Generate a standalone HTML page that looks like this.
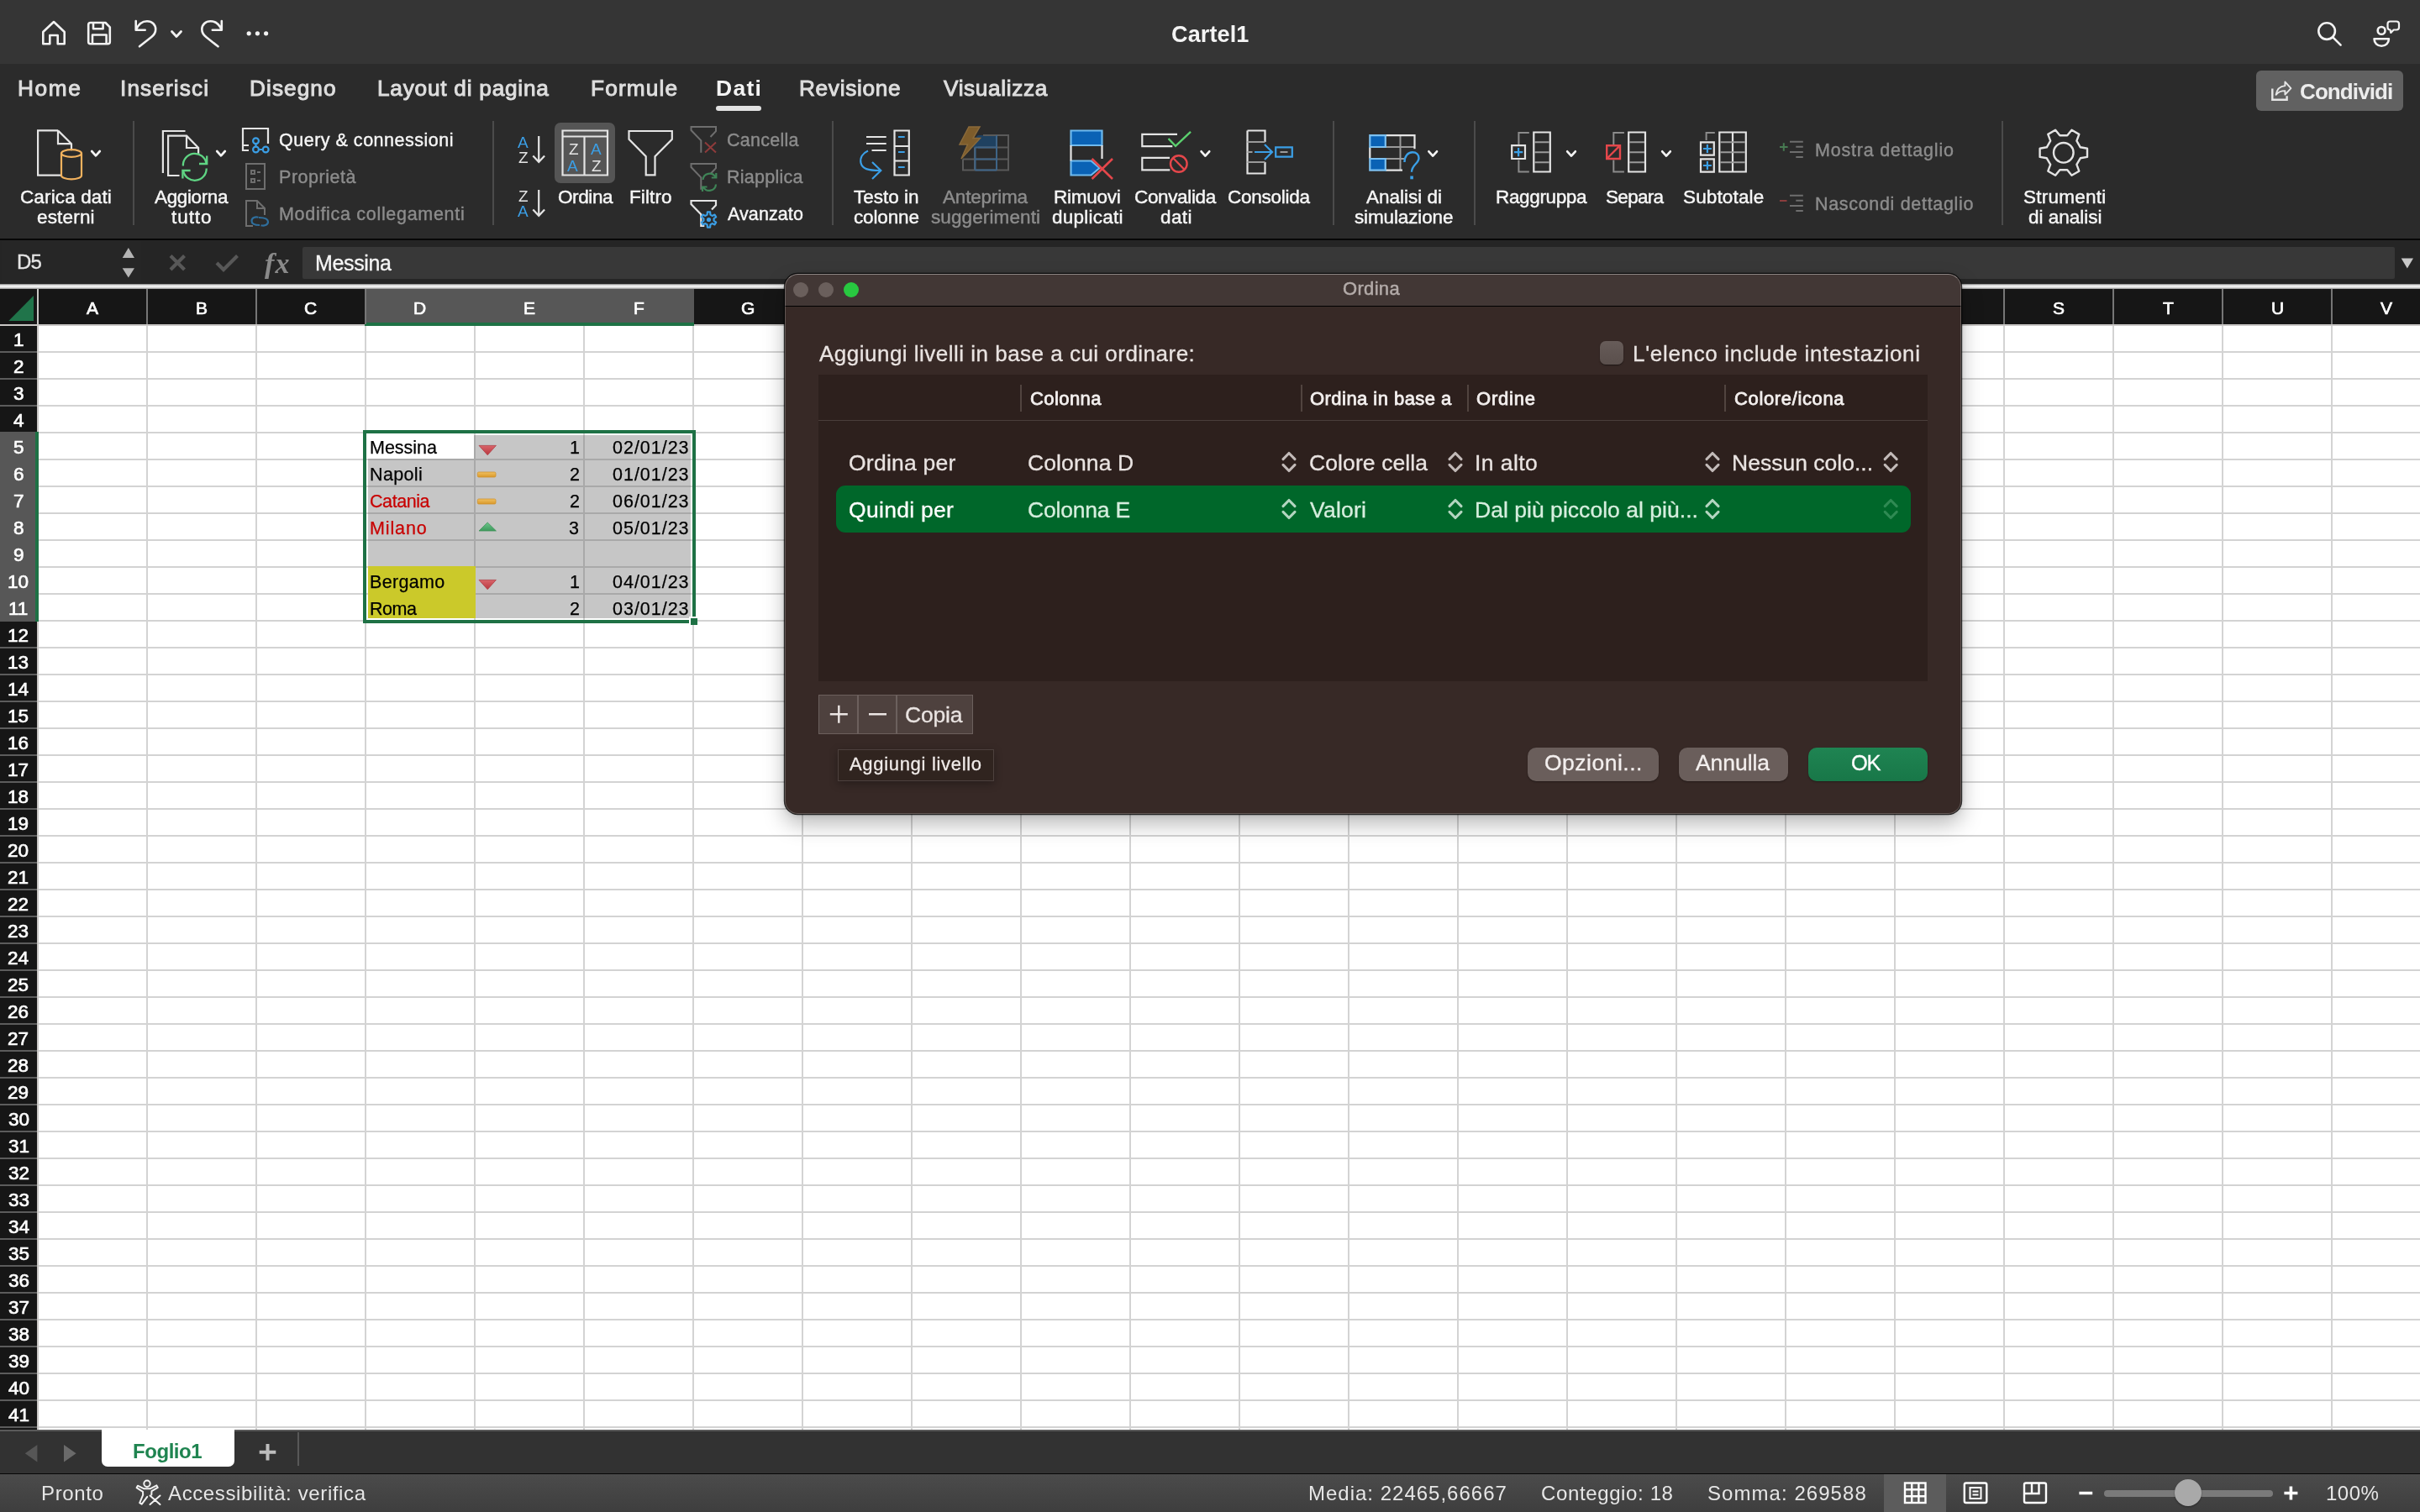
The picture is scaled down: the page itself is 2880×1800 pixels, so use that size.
<!DOCTYPE html>
<html lang="it"><head><meta charset="utf-8"><title>Cartel1</title>
<style>
html,body{margin:0;padding:0}
body{width:2880px;height:1800px;position:relative;overflow:hidden;background:#2b2b2b;font-family:"Liberation Sans",sans-serif;}
body div,body span,body svg{position:absolute;white-space:pre;box-sizing:border-box}
span{display:block;will-change:transform}
</style></head><body>
<div style="left:0px;top:0px;width:2880px;height:76px;background:#353535;"></div>
<div style="left:0px;top:76px;width:2880px;height:208px;background:#2b2b2b;"></div>
<div style="left:0px;top:284px;width:2880px;height:2px;background:#070707;"></div>
<div style="left:0px;top:286px;width:2880px;height:52px;background:#252525;"></div>
<div style="left:2px;top:287px;width:166px;height:50px;background:#262626;"></div>
<div style="left:360px;top:294px;width:2490px;height:38px;background:#383838;border-radius:2px;"></div>
<div style="left:0px;top:337.5px;width:2880px;height:6.5px;background:linear-gradient(#7a7a7a,#d8d8d8 25%,#fafafa 50%,#d0d0d0 78%,#8a8a8a);"></div>
<svg style="left:0px;top:0px;" width="2880" height="76" viewBox="0 0 2880 76" fill="none" stroke-linecap="butt" stroke-linejoin="miter">
<g stroke="#f2f2f2" stroke-width="2.6" stroke-linejoin="round" stroke-linecap="round"><path d="M51.3 52.2V38L64 26l12.7 12v14.2h-8V42h-9.4v10.2z"/><path d="M105.2 29.5a2.5 2.5 0 0 1 2.5-2.5h17.8l5.3 5.3v17.4a2.5 2.5 0 0 1-2.5 2.5h-20.6a2.5 2.5 0 0 1-2.5-2.5zM111 27.5v6.8h11.6v-6.8M110 52v-10.5h16.6V52"/><path d="M161.7 25v10.7h11M161.7 35.7c2.6-6.200 7.300-10.5 13.300-10.5 6 0 10.200 4.300 10.200 9.800 0 4.200-2 6.800-5.200 9.300L166 55.300"/><path d="M263.800 25v10.700h-11M263.800 35.700c-2.600-6.200-7.300-10.500-13.300-10.500-6 0-10.200 4.300-10.200 9.800 0 4.200 2 6.800 5.200 9.300L259.500 55.300"/><path d="M204.500 37.500l5.500 6 5.500-6" stroke-width="2.800"/><circle cx="2769.100" cy="37.100" r="9.800"/><path d="M2776.300 44.400l9.300 9.200"/><circle cx="2834.100" cy="36.400" r="4.400"/><path d="M2825.500 46.200h17.400c0 5-3.600 8.500-8.700 8.500s-8.700-3.500-8.700-8.500z"/><path d="M2844.500 25.500h7.500a3 3 0 0 1 3 3v4a3 3 0 0 1-3 3h-3.300l-3.400 3.400-.800-3.400h0a3 3 0 0 1-3-3v-4a3 3 0 0 1 3-3z" stroke-width="2.200"/></g>
<g fill="#f2f2f2"><circle cx="296.200" cy="39.800" r="2.600"/><circle cx="306.400" cy="39.800" r="2.600"/><circle cx="316.600" cy="39.800" r="2.600"/></g>
</svg>
<span style="left:1393.50px;top:26.00px;font-size:27px;line-height:30px;color:#f4f4f4;font-weight:700;letter-spacing:0.128px;">Cartel1</span>
<span style="left:20.80px;top:90.00px;font-size:26.2px;line-height:30px;color:#dedede;letter-spacing:1.637px;-webkit-text-stroke:1.0px #dedede;">Home</span>
<span style="left:142.80px;top:90.00px;font-size:26.2px;line-height:30px;color:#dedede;letter-spacing:1.122px;-webkit-text-stroke:1.0px #dedede;">Inserisci</span>
<span style="left:297.00px;top:90.00px;font-size:26.2px;line-height:30px;color:#dedede;letter-spacing:1.081px;-webkit-text-stroke:1.0px #dedede;">Disegno</span>
<span style="left:448.70px;top:90.00px;font-size:26.2px;line-height:30px;color:#dedede;letter-spacing:0.778px;-webkit-text-stroke:1.0px #dedede;">Layout di pagina</span>
<span style="left:702.70px;top:90.00px;font-size:26.2px;line-height:30px;color:#dedede;letter-spacing:1.187px;-webkit-text-stroke:1.0px #dedede;">Formule</span>
<span style="left:950.80px;top:90.00px;font-size:26.2px;line-height:30px;color:#dedede;letter-spacing:0.696px;-webkit-text-stroke:1.0px #dedede;">Revisione</span>
<span style="left:1123.00px;top:90.00px;font-size:26.2px;line-height:30px;color:#dedede;letter-spacing:0.649px;-webkit-text-stroke:1.0px #dedede;">Visualizza</span>
<span style="left:852.00px;top:90.00px;font-size:26.5px;line-height:30px;color:#f4f4f4;font-weight:700;letter-spacing:1.267px;">Dati</span>
<div style="left:852px;top:126px;width:54px;height:6px;background:#e2e2e2;border-radius:3px;"></div>
<div style="left:2685px;top:84px;width:175px;height:48px;background:#616161;border-radius:6px;"></div>
<span style="left:2737.00px;top:94.00px;font-size:26px;line-height:30px;color:#ececec;font-weight:700;letter-spacing:-0.901px;">Condividi</span>
<svg style="left:2690px;top:88px;" width="60" height="40" viewBox="2690 88 60 40" fill="none" stroke-linecap="butt" stroke-linejoin="miter">
<g stroke="#e6e6e6" stroke-width="2.400" stroke-linejoin="round" stroke-linecap="round"><path d="M2704.300 105.500v13.200h17.300v-4.500" stroke-linejoin="miter" stroke-linecap="butt"/><path d="M2708.600 112.800c1-6.300 5-10.200 10.800-10.700v-4.700l7 7.700-7 7.500v-4.500c-4.500 0-8.300 1.500-10.800 4.700z" stroke-width="1.900"/></g>
</svg>
<div style="left:158px;top:144px;width:2px;height:124px;background:#4b4b4b;"></div>
<div style="left:586px;top:144px;width:2px;height:124px;background:#4b4b4b;"></div>
<div style="left:990px;top:144px;width:2px;height:124px;background:#4b4b4b;"></div>
<div style="left:1586px;top:144px;width:2px;height:124px;background:#4b4b4b;"></div>
<div style="left:1754px;top:144px;width:2px;height:124px;background:#4b4b4b;"></div>
<div style="left:2382px;top:144px;width:2px;height:124px;background:#4b4b4b;"></div>
<span style="left:23.80px;top:222.00px;font-size:22.5px;line-height:25px;color:#f6f6f6;letter-spacing:0.125px;-webkit-text-stroke:0.45px #f6f6f6;">Carica dati</span>
<span style="left:44.00px;top:246.00px;font-size:22.5px;line-height:25px;color:#f6f6f6;letter-spacing:0.178px;-webkit-text-stroke:0.45px #f6f6f6;">esterni</span>
<span style="left:183.50px;top:222.00px;font-size:22.5px;line-height:25px;color:#f6f6f6;letter-spacing:-0.365px;-webkit-text-stroke:0.45px #f6f6f6;">Aggiorna</span>
<span style="left:204.00px;top:246.00px;font-size:22.5px;line-height:25px;color:#f6f6f6;letter-spacing:0.933px;-webkit-text-stroke:0.45px #f6f6f6;">tutto</span>
<span style="left:331.90px;top:155.00px;font-size:21.5px;line-height:24px;color:#f6f6f6;letter-spacing:0.505px;-webkit-text-stroke:0.4px #f6f6f6;">Query &amp; connessioni</span>
<span style="left:331.90px;top:199.00px;font-size:21.5px;line-height:24px;color:#8c8c8c;letter-spacing:0.540px;-webkit-text-stroke:0.4px #8c8c8c;">Proprietà</span>
<span style="left:331.90px;top:243.00px;font-size:21.5px;line-height:24px;color:#8c8c8c;letter-spacing:0.697px;-webkit-text-stroke:0.4px #8c8c8c;">Modifica collegamenti</span>
<span style="left:663.70px;top:222.00px;font-size:22.5px;line-height:25px;color:#f6f6f6;letter-spacing:-0.404px;-webkit-text-stroke:0.45px #f6f6f6;">Ordina</span>
<span style="left:749.00px;top:222.00px;font-size:22.5px;line-height:25px;color:#f6f6f6;letter-spacing:0.103px;-webkit-text-stroke:0.45px #f6f6f6;">Filtro</span>
<span style="left:864.70px;top:155.00px;font-size:21.5px;line-height:24px;color:#8c8c8c;letter-spacing:0.271px;-webkit-text-stroke:0.4px #8c8c8c;">Cancella</span>
<span style="left:864.70px;top:199.00px;font-size:21.5px;line-height:24px;color:#8c8c8c;letter-spacing:0.265px;-webkit-text-stroke:0.4px #8c8c8c;">Riapplica</span>
<span style="left:865.70px;top:243.00px;font-size:21.5px;line-height:24px;color:#f6f6f6;letter-spacing:0.086px;-webkit-text-stroke:0.4px #f6f6f6;">Avanzato</span>
<span style="left:1016.00px;top:222.00px;font-size:22.5px;line-height:25px;color:#f6f6f6;-webkit-text-stroke:0.45px #f6f6f6;">Testo in</span>
<span style="left:1016.00px;top:246.00px;font-size:22.5px;line-height:25px;color:#f6f6f6;letter-spacing:-0.134px;-webkit-text-stroke:0.45px #f6f6f6;">colonne</span>
<span style="left:1121.80px;top:222.00px;font-size:22.5px;line-height:25px;color:#8c8c8c;letter-spacing:-0.192px;-webkit-text-stroke:0.45px #8c8c8c;">Anteprima</span>
<span style="left:1108.00px;top:246.00px;font-size:22.5px;line-height:25px;color:#8c8c8c;letter-spacing:0.108px;-webkit-text-stroke:0.45px #8c8c8c;">suggerimenti</span>
<span style="left:1253.70px;top:222.00px;font-size:22.5px;line-height:25px;color:#f6f6f6;letter-spacing:-0.261px;-webkit-text-stroke:0.45px #f6f6f6;">Rimuovi</span>
<span style="left:1252.00px;top:246.00px;font-size:22.5px;line-height:25px;color:#f6f6f6;letter-spacing:0.231px;-webkit-text-stroke:0.45px #f6f6f6;">duplicati</span>
<span style="left:1349.70px;top:222.00px;font-size:22.5px;line-height:25px;color:#f6f6f6;letter-spacing:-0.356px;-webkit-text-stroke:0.45px #f6f6f6;">Convalida</span>
<span style="left:1380.50px;top:246.00px;font-size:22.5px;line-height:25px;color:#f6f6f6;letter-spacing:0.374px;-webkit-text-stroke:0.45px #f6f6f6;">dati</span>
<span style="left:1461.00px;top:222.00px;font-size:22.5px;line-height:25px;color:#f6f6f6;letter-spacing:-0.256px;-webkit-text-stroke:0.45px #f6f6f6;">Consolida</span>
<span style="left:1626.00px;top:222.00px;font-size:22.5px;line-height:25px;color:#f6f6f6;letter-spacing:-0.016px;-webkit-text-stroke:0.45px #f6f6f6;">Analisi di</span>
<span style="left:1611.90px;top:246.00px;font-size:22.5px;line-height:25px;color:#f6f6f6;letter-spacing:-0.139px;-webkit-text-stroke:0.45px #f6f6f6;">simulazione</span>
<span style="left:1779.80px;top:222.00px;font-size:22.5px;line-height:25px;color:#f6f6f6;letter-spacing:-0.353px;-webkit-text-stroke:0.45px #f6f6f6;">Raggruppa</span>
<span style="left:1910.90px;top:222.00px;font-size:22.5px;line-height:25px;color:#f6f6f6;letter-spacing:-0.688px;-webkit-text-stroke:0.45px #f6f6f6;">Separa</span>
<span style="left:2002.60px;top:222.00px;font-size:22.5px;line-height:25px;color:#f6f6f6;letter-spacing:0.142px;-webkit-text-stroke:0.45px #f6f6f6;">Subtotale</span>
<span style="left:2159.50px;top:167.00px;font-size:21.5px;line-height:24px;color:#8c8c8c;letter-spacing:0.799px;-webkit-text-stroke:0.4px #8c8c8c;">Mostra dettaglio</span>
<span style="left:2159.50px;top:231.00px;font-size:21.5px;line-height:24px;color:#8c8c8c;letter-spacing:0.680px;-webkit-text-stroke:0.4px #8c8c8c;">Nascondi dettaglio</span>
<span style="left:2407.70px;top:222.00px;font-size:22.5px;line-height:25px;color:#f6f6f6;letter-spacing:0.252px;-webkit-text-stroke:0.45px #f6f6f6;">Strumenti</span>
<span style="left:2413.60px;top:246.00px;font-size:22.5px;line-height:25px;color:#f6f6f6;letter-spacing:-0.017px;-webkit-text-stroke:0.45px #f6f6f6;">di analisi</span>
<div style="left:660px;top:146px;width:72px;height:72px;background:#555555;border-radius:7px;"></div>
<svg style="left:0px;top:140px;" width="2880" height="144" viewBox="0 140 2880 144" fill="none" stroke-linecap="butt" stroke-linejoin="miter">
<path d="M69 155.400H45.100v53.300H72M69 155.400l16 15.800v8M69 155.400v15.800h16" stroke="#e4e4e4" stroke-width="2.200"/>
<g stroke="#f2b25e" stroke-width="2.200"><ellipse cx="85" cy="182.500" rx="12" ry="4.300"/><path d="M73 182.500v26.500c0 2.400 5.400 4.300 12 4.300s12-1.900 12-4.300v-26.500"/></g>
<path d="M109.2 180.0l4.800 5.300 4.800-5.300" stroke="#f4f4f4" stroke-width="2.700" stroke-linecap="round" stroke-linejoin="round"/>
<path d="M220.500 156h-26.600v50M213.500 209h-13.400v-47.300h22l14 14.300v8M222 161.700v14.300h14" stroke="#e4e4e4" stroke-width="2.200"/>
<g stroke="#5fd483" stroke-width="2.300"><path d="M217.900 197.500A13.900 13.900 0 0 1 245.500 194.500M245.700 200.500A13.900 13.900 0 0 1 218.100 203.200"/><path d="M246.200 185.500V195H237M217.400 212.500V203H226.600"/></g>
<path d="M258.2 180.0l4.800 5.300 4.800-5.300" stroke="#f4f4f4" stroke-width="2.700" stroke-linecap="round" stroke-linejoin="round"/>
<path d="M296 179h-7v-26h30v18M289 173h7" stroke="#e4e4e4" stroke-width="2.200"/>
<g stroke="#3b9fe6" stroke-width="2.200"><circle cx="304.500" cy="167.800" r="3.400"/><circle cx="304.500" cy="178" r="3.400"/><circle cx="316.200" cy="178" r="3.400"/><path d="M304.500 171.200v3.400M308 178h4.800"/></g>
<g stroke="#6e6e6e" stroke-width="2"><rect x="293" y="195" width="22" height="30"/><rect x="299" y="203" width="4" height="4"/><rect x="299" y="213" width="4" height="4"/><path d="M306 205h4M306 215h4"/></g>
<path d="M301 269h-8v-30h13l9 9v8M306 239v9h9" stroke="#6e6e6e" stroke-width="2"/>
<g stroke="#2f6e9c" stroke-width="2.200"><path d="M309 268c-3.800 0-9.500-1-9.500-5s4.500-5.200 8-4.200M308 259c3.800 0 11 .800 11 5s-5 5.300-8.500 4.200"/></g>
<path d="M641.200 162v30.500M634.300 185.5l6.900 7.300 6.900-7.300" stroke="#e4e4e4" stroke-width="2.200"/>
<path d="M641.200 226v30.500M634.300 249.5l6.900 7.300 6.900-7.300" stroke="#e4e4e4" stroke-width="2.200"/>
<path d="M669.500 155.500h53.500v53h-53.500zM669.500 162.500h53.500M695.500 162.500v46" stroke="#e4e4e4" stroke-width="2.200"/>
<path d="M748.500 156h51.300v9.800l-20.300 20.400v22.200h-10.800v-22.200l-20.200-20.400z" stroke="#e4e4e4" stroke-width="2.200"/>
<path d="M845.500 163l6.500-6.800v-5.200h-29.500v4l11.800 12.300v14.500" stroke="#6e6e6e" stroke-width="2"/>
<path d="M839 169.500l13 12M852 169.500l-13 12" stroke="#8e3b3b" stroke-width="2"/>
<path d="M845.500 207l6.500-6.800v-5.200h-29.500v4l11.800 12.300v14.500" stroke="#6e6e6e" stroke-width="2"/>
<g stroke="#3f8457" stroke-width="2.200"><path d="M836.500 214a8 8 0 0 1 15-3.200M852 219.500a8 8 0 0 1-15 3.200"/><path d="M852.300 206v5.500h-5.500M836 228v-5.500h5.500"/></g>
<path d="M847 249.500l5-5.300v-5.200h-29.500v4l11.800 12.300v13.700h4" stroke="#e4e4e4" stroke-width="2.200"/>
<path d="M849.6 262.8 L852.2 264.6 L850.5 267.4 L847.6 266.1 L845.4 267.4 L845.1 270.6 L841.9 270.6 L841.6 267.4 L839.4 266.1 L836.5 267.4 L834.8 264.6 L837.4 262.8 L837.4 260.2 L834.8 258.4 L836.5 255.6 L839.4 256.9 L841.6 255.6 L841.9 252.4 L845.1 252.4 L845.4 255.6 L847.6 256.9 L850.5 255.6 L852.2 258.4 L849.6 260.2Z" stroke="#3b9fe6" stroke-width="2.2" stroke-linejoin="round"/>
<circle cx="843.5" cy="261.5" r="2.6" fill="#3b9fe6"/>
<path d="M1031 163h23.700M1031 171h23.700M1037.500 179h17.200" stroke="#e4e4e4" stroke-width="2.200"/>
<path d="M1064.500 155.500h17.300v53h-17.300zM1064.500 174h17.300M1064.500 191.500h17.300" stroke="#e4e4e4" stroke-width="2.200"/>
<path d="M1069 163h7.700M1069 181h7.700M1069 199h7.700M1033 179.500c-6.500 3-9.800 8.500-8.500 14.500 1.600 7 8.500 9 22.500 9M1038 193l10.300 10-10.300 10" stroke="#3b9fe6" stroke-width="2.200"/>
<path d="M1172 161h-8l-15 14.500v0h37.500v-14.500z" fill="#1f4160"/>
<path d="M1146 189.500v13h54v-41.500h-30M1146 189.500h54M1164 175.500h36M1160 175.500v27M1186 161v41.500" stroke="#5a5a5a" stroke-width="2"/>
<path d="M1160.500 175.500v27M1186 161v41.500M1160.500 175.500h25.500M1160.500 189.500h25.500M1160.500 202.500h25.500" stroke="#3e6487" stroke-width="2"/>
<path d="M1153 151h13l-8 13.500h8.500l-22.500 24.500 7.500-17h-9.500z" fill="#7d5c2b" stroke="#8a6a3a" stroke-width="1.500"/>
<path d="M1274.500 155.500h37v17.500h-37zM1274.500 191.500h24l10 8.500-10 8.500h-24z" fill="#0a62b5" stroke="#6db9ef" stroke-width="2.200"/>
<path d="M1274.500 173v18.500M1311.500 173v16" stroke="#e4e4e4" stroke-width="2.200"/>
<path d="M1299.500 189l24.500 24M1324 189l-24.500 24" stroke="#e5474b" stroke-width="2.600"/>
<path d="M1401 159.800h-41.700v14.400h36M1392 187.800h-32.700v14.500h33" stroke="#e4e4e4" stroke-width="2.200"/>
<path d="M1390.500 165l8.500 8.800 18-17" stroke="#5bd06e" stroke-width="2.400"/>
<g stroke="#e5474b" stroke-width="2.400"><circle cx="1402.800" cy="195" r="9.800"/><path d="M1396 188l13.700 14"/></g>
<path d="M1429.6000000000001 180.3l4.800 5.300 4.800-5.300" stroke="#f4f4f4" stroke-width="2.700" stroke-linecap="round" stroke-linejoin="round"/>
<path d="M1484.500 155.500h21v13.500M1484.500 155.500v51h21v-13.500" stroke="#e4e4e4" stroke-width="2.200"/>
<path d="M1484.500 169h21M1484.500 193h21M1484.500 181h6" stroke="#9a9a9a" stroke-width="2"/>
<path d="M1493 181h20M1505 172l9 9-9 9M1518.200 175.400h19.600v11.200h-19.600z" stroke="#3b9fe6" stroke-width="2.200"/>
<path d="M1523.500 181h9" stroke="#9a9a9a" stroke-width="2"/>
<path d="M1630.300 161.200h18v13.800h-18zM1630.300 189h18v13.600h-18z" fill="#0a62b5"/>
<path d="M1649 175h34M1649 189h22M1666.500 161v41" stroke="#9a9a9a" stroke-width="2"/>
<path d="M1649 161.200h34.500v16M1649 202.600h20M1630.300 175v14" stroke="#e4e4e4" stroke-width="2.200"/>
<path d="M1630.300 161.200h18.500v13.800h-18.500zM1630.300 189h18.500v13.600h-18.500z" stroke="#7cc0f0" stroke-width="2.200"/>
<path d="M1671.500 193c0-7 4-11.800 9.500-11.800 4.500 0 7.500 3 7.500 7 0 6.500-8.500 8-8.500 16.500" stroke="#3b9fe6" stroke-width="2.400"/><rect x="1678.300" y="209.500" width="3.600" height="3.800" fill="#3b9fe6"/>
<path d="M1700.4 180.3l4.800 5.300 4.800-5.300" stroke="#f4f4f4" stroke-width="2.700" stroke-linecap="round" stroke-linejoin="round"/>
<path d="M1825.3 157.500h19.5v47h-19.5z" stroke="#e4e4e4" stroke-width="2.200"/>
<path d="M1826.3 169.300h17.5M1826.3 181.300h17.5M1826.3 193.300h17.5" stroke="#9a9a9a" stroke-width="2"/>
<path d="M1819.800 158h-12.400v14M1819.800 204.500h-12.400v-14" stroke="#8c8c8c" stroke-width="2"/>
<path d="M1799.200 173.200h15.800v15.800h-15.800z" stroke="#e4e4e4" stroke-width="2.200"/><path d="M1807.100 176v10.200M1802 181.100h10.200" stroke="#3b9fe6" stroke-width="2.200"/>
<path d="M1865.2 180.3l4.800 5.300 4.800-5.300" stroke="#f4f4f4" stroke-width="2.700" stroke-linecap="round" stroke-linejoin="round"/>
<path d="M1938.2 157.500h19.799999999999955v47h-19.799999999999955z" stroke="#e4e4e4" stroke-width="2.200"/>
<path d="M1939.2 169.300h17.799999999999955M1939.2 181.300h17.799999999999955M1939.2 193.300h17.799999999999955" stroke="#9a9a9a" stroke-width="2"/>
<path d="M1932.900 158h-12.600v14M1932.900 204.500h-12.600v-14" stroke="#8c8c8c" stroke-width="2"/>
<path d="M1912.200 173.200h15.800v15.800h-15.800zM1912.200 189l15.800-15.800" stroke="#e5474b" stroke-width="2.400"/>
<path d="M1978.2 180.3l4.800 5.300 4.800-5.300" stroke="#f4f4f4" stroke-width="2.700" stroke-linecap="round" stroke-linejoin="round"/>
<path d="M2046.300 157.500h31.500v47h-31.500zM2062 157.500v47" stroke="#e4e4e4" stroke-width="2.200"/>
<path d="M2047.300 169.300h29.500M2047.300 181.300h29.500M2047.300 193.300h29.500" stroke="#9a9a9a" stroke-width="2"/>
<path d="M2040.800 158h-10.200v9" stroke="#8c8c8c" stroke-width="2"/>
<path d="M2024 169.400h15.800v15.200h-15.800zM2024 189.400h15.800v15.200h-15.800z" stroke="#e4e4e4" stroke-width="2.200"/><path d="M2031.900 172v10M2026.900 177h10M2031.900 192v10M2026.900 197h10" stroke="#3b9fe6" stroke-width="2.200"/>
<path d="M2118 175h9.600M2122.800 170.200v9.600" stroke="#477a52" stroke-width="2"/><path d="M2118 239h8.500" stroke="#8a3d3d" stroke-width="2"/>
<path d="M2130 168.7h15.800M2137.300 174.7h8.500M2130 181h15.800M2137.300 187h8.500" stroke="#6e6e6e" stroke-width="2"/>
<path d="M2130 232.7h15.800M2137.300 238.7h8.500M2130 245h15.800M2137.300 251h8.500" stroke="#6e6e6e" stroke-width="2"/>
<path d="M2475.8 175.3 L2484.0 176.7 L2484.0 186.9 L2475.8 188.3 L2471.4 195.9 L2474.3 203.7 L2465.5 208.8 L2460.2 202.3 L2451.4 202.3 L2446.1 208.8 L2437.3 203.7 L2440.2 195.9 L2435.8 188.3 L2427.6 186.9 L2427.6 176.7 L2435.8 175.3 L2440.2 167.7 L2437.3 159.9 L2446.1 154.8 L2451.4 161.3 L2460.2 161.3 L2465.5 154.8 L2474.3 159.9 L2471.4 167.7Z" stroke="#e4e4e4" stroke-width="2.4" stroke-linejoin="round"/>
<circle cx="2455.8" cy="181.8" r="11.8" stroke="#e4e4e4" stroke-width="2.4"/>
</svg>
<span style="left:616.00px;top:159.00px;font-size:19px;line-height:21px;color:#3b9fe6;">A</span>
<span style="left:616.50px;top:177.00px;font-size:19px;line-height:21px;color:#e4e4e4;">Z</span>
<span style="left:616.50px;top:223.00px;font-size:19px;line-height:21px;color:#e4e4e4;">Z</span>
<span style="left:616.00px;top:241.00px;font-size:19px;line-height:21px;color:#3b9fe6;">A</span>
<span style="left:676.50px;top:167.00px;font-size:19px;line-height:21px;color:#e4e4e4;">Z</span>
<span style="left:674.50px;top:187.00px;font-size:19px;line-height:21px;color:#3b9fe6;">A</span>
<span style="left:702.50px;top:167.00px;font-size:19px;line-height:21px;color:#3b9fe6;">A</span>
<span style="left:703.50px;top:187.00px;font-size:19px;line-height:21px;color:#e4e4e4;">Z</span>
<span style="left:20.40px;top:298.00px;font-size:24px;line-height:27px;color:#e6e6e6;letter-spacing:-0.732px;-webkit-text-stroke:0.3px #e6e6e6;">D5</span>
<span style="left:375.00px;top:299.00px;font-size:25px;line-height:28px;color:#f6f6f6;letter-spacing:-0.365px;-webkit-text-stroke:0.3px #f6f6f6;">Messina</span>
<span style="left:315.00px;top:295.00px;font-size:34px;line-height:37px;color:#8a8a8a;font-weight:700;font-style:italic;font-family:'Liberation Serif', serif;letter-spacing:1.278px;">fx</span>
<svg style="left:140px;top:288px;" width="2740" height="50" viewBox="140 288 2740 50" fill="none" stroke-linecap="butt" stroke-linejoin="miter">
<path d="M145.700 306.900h14.300l-7.150-12zM145.700 319.300h14.300l-7.150 11.300z" fill="#b4b4b4"/>
<path d="M203 304.500l16.500 16.500M219.500 304.500l-16.500 16.500M258 313l8 8 16.500-16.500" stroke="#585858" stroke-width="4.200"/>
<path d="M2857.700 307.500h14.300l-7.150 12z" fill="#c8c8c8"/>
</svg>
<div style="left:46px;top:388px;width:2834px;height:1314px;background-color:#fff;background-image:linear-gradient(to bottom,transparent 30px,#d3d3d3 30px),linear-gradient(to right,transparent 128px,#d3d3d3 128px);background-size:100% 32px,130px 100%;"></div>
<div style="left:0px;top:344px;width:2880px;height:42px;background:#161616;"></div>
<div style="left:0px;top:386px;width:2880px;height:2px;background:#c9c7c5;"></div>
<div style="left:0px;top:388px;width:44px;height:1314px;background:#161616;"></div>
<div style="left:44px;top:344px;width:2px;height:1358px;background:#c9c7c5;"></div>
<div style="left:434px;top:344px;width:392px;height:42px;background:#575757;"></div>
<div style="left:434px;top:384px;width:392px;height:4px;background:#1e7145;"></div>
<div style="left:0px;top:514px;width:44px;height:226px;background:#575757;"></div>
<div style="left:42px;top:514px;width:4px;height:226px;background:#1e7145;"></div>
<div style="left:174px;top:344px;width:2px;height:42px;background:#767676;"></div>
<div style="left:304px;top:344px;width:2px;height:42px;background:#767676;"></div>
<div style="left:434px;top:344px;width:2px;height:42px;background:#767676;"></div>
<div style="left:954px;top:344px;width:2px;height:42px;background:#767676;"></div>
<div style="left:1084px;top:344px;width:2px;height:42px;background:#767676;"></div>
<div style="left:1214px;top:344px;width:2px;height:42px;background:#767676;"></div>
<div style="left:1344px;top:344px;width:2px;height:42px;background:#767676;"></div>
<div style="left:1474px;top:344px;width:2px;height:42px;background:#767676;"></div>
<div style="left:1604px;top:344px;width:2px;height:42px;background:#767676;"></div>
<div style="left:1734px;top:344px;width:2px;height:42px;background:#767676;"></div>
<div style="left:1864px;top:344px;width:2px;height:42px;background:#767676;"></div>
<div style="left:1994px;top:344px;width:2px;height:42px;background:#767676;"></div>
<div style="left:2124px;top:344px;width:2px;height:42px;background:#767676;"></div>
<div style="left:2254px;top:344px;width:2px;height:42px;background:#767676;"></div>
<div style="left:2384px;top:344px;width:2px;height:42px;background:#767676;"></div>
<div style="left:2514px;top:344px;width:2px;height:42px;background:#767676;"></div>
<div style="left:2644px;top:344px;width:2px;height:42px;background:#767676;"></div>
<div style="left:2774px;top:344px;width:2px;height:42px;background:#767676;"></div>
<div style="left:0px;top:418px;width:44px;height:2px;background:#5c5c5c;"></div>
<div style="left:0px;top:450px;width:44px;height:2px;background:#5c5c5c;"></div>
<div style="left:0px;top:482px;width:44px;height:2px;background:#5c5c5c;"></div>
<div style="left:0px;top:770px;width:44px;height:2px;background:#5c5c5c;"></div>
<div style="left:0px;top:802px;width:44px;height:2px;background:#5c5c5c;"></div>
<div style="left:0px;top:834px;width:44px;height:2px;background:#5c5c5c;"></div>
<div style="left:0px;top:866px;width:44px;height:2px;background:#5c5c5c;"></div>
<div style="left:0px;top:898px;width:44px;height:2px;background:#5c5c5c;"></div>
<div style="left:0px;top:930px;width:44px;height:2px;background:#5c5c5c;"></div>
<div style="left:0px;top:962px;width:44px;height:2px;background:#5c5c5c;"></div>
<div style="left:0px;top:994px;width:44px;height:2px;background:#5c5c5c;"></div>
<div style="left:0px;top:1026px;width:44px;height:2px;background:#5c5c5c;"></div>
<div style="left:0px;top:1058px;width:44px;height:2px;background:#5c5c5c;"></div>
<div style="left:0px;top:1090px;width:44px;height:2px;background:#5c5c5c;"></div>
<div style="left:0px;top:1122px;width:44px;height:2px;background:#5c5c5c;"></div>
<div style="left:0px;top:1154px;width:44px;height:2px;background:#5c5c5c;"></div>
<div style="left:0px;top:1186px;width:44px;height:2px;background:#5c5c5c;"></div>
<div style="left:0px;top:1218px;width:44px;height:2px;background:#5c5c5c;"></div>
<div style="left:0px;top:1250px;width:44px;height:2px;background:#5c5c5c;"></div>
<div style="left:0px;top:1282px;width:44px;height:2px;background:#5c5c5c;"></div>
<div style="left:0px;top:1314px;width:44px;height:2px;background:#5c5c5c;"></div>
<div style="left:0px;top:1346px;width:44px;height:2px;background:#5c5c5c;"></div>
<div style="left:0px;top:1378px;width:44px;height:2px;background:#5c5c5c;"></div>
<div style="left:0px;top:1410px;width:44px;height:2px;background:#5c5c5c;"></div>
<div style="left:0px;top:1442px;width:44px;height:2px;background:#5c5c5c;"></div>
<div style="left:0px;top:1474px;width:44px;height:2px;background:#5c5c5c;"></div>
<div style="left:0px;top:1506px;width:44px;height:2px;background:#5c5c5c;"></div>
<div style="left:0px;top:1538px;width:44px;height:2px;background:#5c5c5c;"></div>
<div style="left:0px;top:1570px;width:44px;height:2px;background:#5c5c5c;"></div>
<div style="left:0px;top:1602px;width:44px;height:2px;background:#5c5c5c;"></div>
<div style="left:0px;top:1634px;width:44px;height:2px;background:#5c5c5c;"></div>
<div style="left:0px;top:1666px;width:44px;height:2px;background:#5c5c5c;"></div>
<div style="left:0px;top:1698px;width:44px;height:2px;background:#5c5c5c;"></div>
<svg style="left:0px;top:344px;" width="46" height="44" viewBox="0 344 46 44" fill="none" stroke-linecap="butt" stroke-linejoin="miter">
<path d="M10.300 382h29.700v-30z" fill="#20744a"/>
</svg>
<span style="left:103.00px;top:355.00px;font-size:21px;line-height:23px;color:#fff;-webkit-text-stroke:0.7px #fff;">A</span>
<span style="left:233.00px;top:355.00px;font-size:21px;line-height:23px;color:#fff;-webkit-text-stroke:0.7px #fff;">B</span>
<span style="left:362.00px;top:355.00px;font-size:21px;line-height:23px;color:#fff;-webkit-text-stroke:0.7px #fff;">C</span>
<span style="left:492.00px;top:355.00px;font-size:21px;line-height:23px;color:#fff;-webkit-text-stroke:0.7px #fff;">D</span>
<span style="left:622.50px;top:355.00px;font-size:21px;line-height:23px;color:#fff;-webkit-text-stroke:0.7px #fff;">E</span>
<span style="left:753.50px;top:355.00px;font-size:21px;line-height:23px;color:#fff;-webkit-text-stroke:0.7px #fff;">F</span>
<span style="left:882.00px;top:355.00px;font-size:21px;line-height:23px;color:#fff;-webkit-text-stroke:0.7px #fff;">G</span>
<span style="left:1012.50px;top:355.00px;font-size:21px;line-height:23px;color:#fff;-webkit-text-stroke:0.7px #fff;">H</span>
<span style="left:1147.50px;top:355.00px;font-size:21px;line-height:23px;color:#fff;-webkit-text-stroke:0.7px #fff;">I</span>
<span style="left:1275.50px;top:355.00px;font-size:21px;line-height:23px;color:#fff;-webkit-text-stroke:0.7px #fff;">J</span>
<span style="left:1402.50px;top:355.00px;font-size:21px;line-height:23px;color:#fff;-webkit-text-stroke:0.7px #fff;">K</span>
<span style="left:1534.00px;top:355.00px;font-size:21px;line-height:23px;color:#fff;-webkit-text-stroke:0.7px #fff;">L</span>
<span style="left:1661.50px;top:355.00px;font-size:21px;line-height:23px;color:#fff;-webkit-text-stroke:0.7px #fff;">M</span>
<span style="left:1792.50px;top:355.00px;font-size:21px;line-height:23px;color:#fff;-webkit-text-stroke:0.7px #fff;">N</span>
<span style="left:1921.50px;top:355.00px;font-size:21px;line-height:23px;color:#fff;-webkit-text-stroke:0.7px #fff;">O</span>
<span style="left:2053.00px;top:355.00px;font-size:21px;line-height:23px;color:#fff;-webkit-text-stroke:0.7px #fff;">P</span>
<span style="left:2181.50px;top:355.00px;font-size:21px;line-height:23px;color:#fff;-webkit-text-stroke:0.7px #fff;">Q</span>
<span style="left:2312.00px;top:355.00px;font-size:21px;line-height:23px;color:#fff;-webkit-text-stroke:0.7px #fff;">R</span>
<span style="left:2443.00px;top:355.00px;font-size:21px;line-height:23px;color:#fff;-webkit-text-stroke:0.7px #fff;">S</span>
<span style="left:2573.50px;top:355.00px;font-size:21px;line-height:23px;color:#fff;-webkit-text-stroke:0.7px #fff;">T</span>
<span style="left:2702.50px;top:355.00px;font-size:21px;line-height:23px;color:#fff;-webkit-text-stroke:0.7px #fff;">U</span>
<span style="left:2833.00px;top:355.00px;font-size:21px;line-height:23px;color:#fff;-webkit-text-stroke:0.7px #fff;">V</span>
<span style="left:15.50px;top:392.00px;font-size:22.5px;line-height:25px;color:#fff;-webkit-text-stroke:0.7px #fff;">1</span>
<span style="left:15.50px;top:424.00px;font-size:22.5px;line-height:25px;color:#fff;-webkit-text-stroke:0.7px #fff;">2</span>
<span style="left:16.00px;top:456.00px;font-size:22.5px;line-height:25px;color:#fff;-webkit-text-stroke:0.7px #fff;">3</span>
<span style="left:16.00px;top:488.00px;font-size:22.5px;line-height:25px;color:#fff;-webkit-text-stroke:0.7px #fff;">4</span>
<span style="left:16.00px;top:520.00px;font-size:22.5px;line-height:25px;color:#fff;-webkit-text-stroke:0.7px #fff;">5</span>
<span style="left:15.50px;top:552.00px;font-size:22.5px;line-height:25px;color:#fff;-webkit-text-stroke:0.7px #fff;">6</span>
<span style="left:15.50px;top:584.00px;font-size:22.5px;line-height:25px;color:#fff;-webkit-text-stroke:0.7px #fff;">7</span>
<span style="left:16.00px;top:616.00px;font-size:22.5px;line-height:25px;color:#fff;-webkit-text-stroke:0.7px #fff;">8</span>
<span style="left:15.50px;top:648.00px;font-size:22.5px;line-height:25px;color:#fff;-webkit-text-stroke:0.7px #fff;">9</span>
<span style="left:9.24px;top:680.00px;font-size:22.5px;line-height:25px;color:#fff;-webkit-text-stroke:0.7px #fff;">10</span>
<span style="left:10.08px;top:712.00px;font-size:22.5px;line-height:25px;color:#fff;-webkit-text-stroke:0.7px #fff;">11</span>
<span style="left:9.24px;top:744.00px;font-size:22.5px;line-height:25px;color:#fff;-webkit-text-stroke:0.7px #fff;">12</span>
<span style="left:9.24px;top:776.00px;font-size:22.5px;line-height:25px;color:#fff;-webkit-text-stroke:0.7px #fff;">13</span>
<span style="left:9.24px;top:808.00px;font-size:22.5px;line-height:25px;color:#fff;-webkit-text-stroke:0.7px #fff;">14</span>
<span style="left:9.24px;top:840.00px;font-size:22.5px;line-height:25px;color:#fff;-webkit-text-stroke:0.7px #fff;">15</span>
<span style="left:9.24px;top:872.00px;font-size:22.5px;line-height:25px;color:#fff;-webkit-text-stroke:0.7px #fff;">16</span>
<span style="left:9.24px;top:904.00px;font-size:22.5px;line-height:25px;color:#fff;-webkit-text-stroke:0.7px #fff;">17</span>
<span style="left:9.24px;top:936.00px;font-size:22.5px;line-height:25px;color:#fff;-webkit-text-stroke:0.7px #fff;">18</span>
<span style="left:9.24px;top:968.00px;font-size:22.5px;line-height:25px;color:#fff;-webkit-text-stroke:0.7px #fff;">19</span>
<span style="left:9.24px;top:1000.00px;font-size:22.5px;line-height:25px;color:#fff;-webkit-text-stroke:0.7px #fff;">20</span>
<span style="left:9.24px;top:1032.00px;font-size:22.5px;line-height:25px;color:#fff;-webkit-text-stroke:0.7px #fff;">21</span>
<span style="left:9.24px;top:1064.00px;font-size:22.5px;line-height:25px;color:#fff;-webkit-text-stroke:0.7px #fff;">22</span>
<span style="left:9.24px;top:1096.00px;font-size:22.5px;line-height:25px;color:#fff;-webkit-text-stroke:0.7px #fff;">23</span>
<span style="left:9.24px;top:1128.00px;font-size:22.5px;line-height:25px;color:#fff;-webkit-text-stroke:0.7px #fff;">24</span>
<span style="left:9.24px;top:1160.00px;font-size:22.5px;line-height:25px;color:#fff;-webkit-text-stroke:0.7px #fff;">25</span>
<span style="left:9.24px;top:1192.00px;font-size:22.5px;line-height:25px;color:#fff;-webkit-text-stroke:0.7px #fff;">26</span>
<span style="left:9.24px;top:1224.00px;font-size:22.5px;line-height:25px;color:#fff;-webkit-text-stroke:0.7px #fff;">27</span>
<span style="left:9.24px;top:1256.00px;font-size:22.5px;line-height:25px;color:#fff;-webkit-text-stroke:0.7px #fff;">28</span>
<span style="left:9.24px;top:1288.00px;font-size:22.5px;line-height:25px;color:#fff;-webkit-text-stroke:0.7px #fff;">29</span>
<span style="left:9.74px;top:1320.00px;font-size:22.5px;line-height:25px;color:#fff;-webkit-text-stroke:0.7px #fff;">30</span>
<span style="left:9.74px;top:1352.00px;font-size:22.5px;line-height:25px;color:#fff;-webkit-text-stroke:0.7px #fff;">31</span>
<span style="left:9.74px;top:1384.00px;font-size:22.5px;line-height:25px;color:#fff;-webkit-text-stroke:0.7px #fff;">32</span>
<span style="left:9.74px;top:1416.00px;font-size:22.5px;line-height:25px;color:#fff;-webkit-text-stroke:0.7px #fff;">33</span>
<span style="left:9.74px;top:1448.00px;font-size:22.5px;line-height:25px;color:#fff;-webkit-text-stroke:0.7px #fff;">34</span>
<span style="left:9.74px;top:1480.00px;font-size:22.5px;line-height:25px;color:#fff;-webkit-text-stroke:0.7px #fff;">35</span>
<span style="left:9.74px;top:1512.00px;font-size:22.5px;line-height:25px;color:#fff;-webkit-text-stroke:0.7px #fff;">36</span>
<span style="left:9.74px;top:1544.00px;font-size:22.5px;line-height:25px;color:#fff;-webkit-text-stroke:0.7px #fff;">37</span>
<span style="left:9.74px;top:1576.00px;font-size:22.5px;line-height:25px;color:#fff;-webkit-text-stroke:0.7px #fff;">38</span>
<span style="left:9.74px;top:1608.00px;font-size:22.5px;line-height:25px;color:#fff;-webkit-text-stroke:0.7px #fff;">39</span>
<span style="left:9.74px;top:1640.00px;font-size:22.5px;line-height:25px;color:#fff;-webkit-text-stroke:0.7px #fff;">40</span>
<span style="left:9.74px;top:1672.00px;font-size:22.5px;line-height:25px;color:#fff;-webkit-text-stroke:0.7px #fff;">41</span>
<div style="left:438px;top:518px;width:384px;height:218px;background:#c6c6c6;"></div>
<div style="left:438px;top:546px;width:384px;height:2px;background:#a9a9a9;"></div>
<div style="left:438px;top:578px;width:384px;height:2px;background:#a9a9a9;"></div>
<div style="left:438px;top:610px;width:384px;height:2px;background:#a9a9a9;"></div>
<div style="left:438px;top:642px;width:384px;height:2px;background:#a9a9a9;"></div>
<div style="left:438px;top:674px;width:384px;height:2px;background:#a9a9a9;"></div>
<div style="left:438px;top:706px;width:384px;height:2px;background:#a9a9a9;"></div>
<div style="left:564px;top:518px;width:2px;height:218px;background:#a9a9a9;"></div>
<div style="left:694px;top:518px;width:2px;height:218px;background:#a9a9a9;"></div>
<div style="left:438px;top:518px;width:126px;height:28px;background:#ffffff;"></div>
<div style="left:438px;top:674px;width:128px;height:62px;background:#cbc92a;"></div>
<div style="left:432px;top:512px;width:396px;height:230px;border:4px solid #1e7145;"></div>
<div style="left:820px;top:734px;width:10px;height:10px;background:#ffffff;"></div>
<div style="left:822px;top:736px;width:8px;height:8px;background:#1e7145;"></div>
<span style="left:440.40px;top:521.00px;font-size:21.5px;line-height:24px;color:#000;letter-spacing:-0.033px;-webkit-text-stroke:0.25px #000;">Messina</span>
<span style="left:440.40px;top:553.00px;font-size:21.5px;line-height:24px;color:#000;letter-spacing:0.365px;-webkit-text-stroke:0.25px #000;">Napoli</span>
<span style="left:440.40px;top:585.00px;font-size:21.5px;line-height:24px;color:#c80000;letter-spacing:-0.425px;-webkit-text-stroke:0.25px #c80000;">Catania</span>
<span style="left:440.40px;top:617.00px;font-size:21.5px;line-height:24px;color:#c80000;letter-spacing:0.885px;-webkit-text-stroke:0.25px #c80000;">Milano</span>
<span style="left:440.40px;top:681.00px;font-size:21.5px;line-height:24px;color:#000;letter-spacing:0.336px;-webkit-text-stroke:0.25px #000;">Bergamo</span>
<span style="left:440.40px;top:713.00px;font-size:21.5px;line-height:24px;color:#000;letter-spacing:-0.465px;-webkit-text-stroke:0.25px #000;">Roma</span>
<span style="left:678.20px;top:521.00px;font-size:21.5px;line-height:24px;color:#000;-webkit-text-stroke:0.25px #000;">1</span>
<span style="left:678.20px;top:553.00px;font-size:21.5px;line-height:24px;color:#000;-webkit-text-stroke:0.25px #000;">2</span>
<span style="left:678.20px;top:585.00px;font-size:21.5px;line-height:24px;color:#000;-webkit-text-stroke:0.25px #000;">2</span>
<span style="left:677.20px;top:617.00px;font-size:21.5px;line-height:24px;color:#000;-webkit-text-stroke:0.25px #000;">3</span>
<span style="left:678.20px;top:681.00px;font-size:21.5px;line-height:24px;color:#000;-webkit-text-stroke:0.25px #000;">1</span>
<span style="left:678.20px;top:713.00px;font-size:21.5px;line-height:24px;color:#000;-webkit-text-stroke:0.25px #000;">2</span>
<span style="left:728.60px;top:521.00px;font-size:21.5px;line-height:24px;color:#000;letter-spacing:0.981px;-webkit-text-stroke:0.25px #000;">02/01/23</span>
<span style="left:728.60px;top:553.00px;font-size:21.5px;line-height:24px;color:#000;letter-spacing:0.981px;-webkit-text-stroke:0.25px #000;">01/01/23</span>
<span style="left:728.60px;top:585.00px;font-size:21.5px;line-height:24px;color:#000;letter-spacing:0.981px;-webkit-text-stroke:0.25px #000;">06/01/23</span>
<span style="left:728.60px;top:617.00px;font-size:21.5px;line-height:24px;color:#000;letter-spacing:0.981px;-webkit-text-stroke:0.25px #000;">05/01/23</span>
<span style="left:728.60px;top:681.00px;font-size:21.5px;line-height:24px;color:#000;letter-spacing:0.981px;-webkit-text-stroke:0.25px #000;">04/01/23</span>
<span style="left:728.60px;top:713.00px;font-size:21.5px;line-height:24px;color:#000;letter-spacing:0.981px;-webkit-text-stroke:0.25px #000;">03/01/23</span>
<svg style="left:566px;top:518px;" width="30" height="220" viewBox="566 518 30 220" fill="none" stroke-linecap="butt" stroke-linejoin="miter">
<defs><linearGradient id="gr" x1="0" y1="0" x2="0" y2="1"><stop offset="0" stop-color="#d9646a"/><stop offset="1" stop-color="#b8383f"/></linearGradient><linearGradient id="gg" x1="0" y1="0" x2="0" y2="1"><stop offset="0" stop-color="#6dc48a"/><stop offset="1" stop-color="#3d9a5c"/></linearGradient><linearGradient id="gy" x1="0" y1="0" x2="0" y2="1"><stop offset="0" stop-color="#f0c060"/><stop offset="1" stop-color="#d9982a"/></linearGradient></defs>
<path d="M570 530.4h20.400l-10.200 11.300z" fill="url(#gr)" stroke="#b04048" stroke-width=".8"/>
<path d="M570 690.4h20.400l-10.200 11.300z" fill="url(#gr)" stroke="#b04048" stroke-width=".8"/>
<rect x="568.300" y="562" width="21.700" height="6" rx="1.500" fill="url(#gy)" stroke="#cf932f" stroke-width=".8"/>
<rect x="568.300" y="594" width="21.700" height="6" rx="1.500" fill="url(#gy)" stroke="#cf932f" stroke-width=".8"/>
<path d="M570 632h20.400l-10.200-10z" fill="url(#gg)" stroke="#3f9259" stroke-width=".8"/>
</svg>
<div style="left:934.3px;top:326.2px;width:1399.3px;height:643.3px;border-radius:15.500px;background:#372926;box-shadow:0 0 0 1.200px rgba(0,0,0,.8),0 12px 26px rgba(0,0,0,.28),0 1px 8px rgba(0,0,0,.12);overflow:hidden;"><div style="left:0;top:0;width:1399.3px;height:37.800px;background:#423735;"></div><div style="left:0;top:37.800px;width:1399.3px;height:1.100px;background:#000;"></div><div style="left:0;top:0;width:1399.3px;height:643.3px;border-radius:15.500px;border:1.800px solid rgba(255,255,255,.22);border-top-color:rgba(255,255,255,.4);"></div></div>
<div style="left:943.6999999999999px;top:335.8px;width:18.4px;height:18.4px;background:#6a5f5c;border-radius:50%;"></div>
<div style="left:973.5999999999999px;top:335.8px;width:18.4px;height:18.4px;background:#6a5f5c;border-radius:50%;"></div>
<div style="left:1003.8px;top:335.8px;width:18.4px;height:18.4px;background:#28c840;border-radius:50%;"></div>
<span style="left:1597.90px;top:331.00px;font-size:22px;line-height:25px;color:#b3aba9;letter-spacing:0.321px;-webkit-text-stroke:0.5px #b3aba9;">Ordina</span>
<span style="left:974.70px;top:406.00px;font-size:26px;line-height:30px;color:#e9e3e1;letter-spacing:0.488px;-webkit-text-stroke:0.3px #e9e3e1;">Aggiungi livelli in base a cui ordinare:</span>
<div style="left:1904px;top:406px;width:28px;height:28px;background:linear-gradient(#675c59,#5a4f4c);border-radius:7px;box-shadow:0 1px 1.500px rgba(0,0,0,.5);"></div>
<span style="left:1943.00px;top:406.00px;font-size:26px;line-height:30px;color:#e9e3e1;letter-spacing:0.679px;-webkit-text-stroke:0.3px #e9e3e1;">L'elenco include intestazioni</span>
<div style="left:974px;top:446px;width:1320px;height:364.5px;background:#2d201d;"></div>
<div style="left:974px;top:499.5px;width:1320px;height:1.5px;background:#4a3e3b;"></div>
<div style="left:1214px;top:458px;width:2px;height:31.5px;background:#51443f;"></div>
<div style="left:1547.7px;top:458px;width:2px;height:31.5px;background:#51443f;"></div>
<div style="left:1746px;top:458px;width:2px;height:31.5px;background:#51443f;"></div>
<div style="left:2052px;top:458px;width:2px;height:31.5px;background:#51443f;"></div>
<span style="left:1225.50px;top:462.00px;font-size:22px;line-height:25px;color:#f3efee;letter-spacing:0.414px;-webkit-text-stroke:0.8px #f3efee;">Colonna</span>
<span style="left:1559.30px;top:462.00px;font-size:22px;line-height:25px;color:#f3efee;letter-spacing:0.460px;-webkit-text-stroke:0.8px #f3efee;">Ordina in base a</span>
<span style="left:1757.10px;top:462.00px;font-size:22px;line-height:25px;color:#f3efee;letter-spacing:0.781px;-webkit-text-stroke:0.8px #f3efee;">Ordine</span>
<span style="left:2063.60px;top:462.00px;font-size:22px;line-height:25px;color:#f3efee;letter-spacing:0.638px;-webkit-text-stroke:0.8px #f3efee;">Colore/icona</span>
<div style="left:994.5px;top:578px;width:1279.5px;height:56px;background:#00672a;border-radius:11px;"></div>
<span style="left:1009.70px;top:536.00px;font-size:26.5px;line-height:30px;color:#e9e3e1;letter-spacing:0.236px;-webkit-text-stroke:0.3px #e9e3e1;">Ordina per</span>
<span style="left:1223.40px;top:536.00px;font-size:26.5px;line-height:30px;color:#e9e3e1;letter-spacing:0.115px;-webkit-text-stroke:0.3px #e9e3e1;">Colonna D</span>
<span style="left:1558.00px;top:536.00px;font-size:26.5px;line-height:30px;color:#e9e3e1;letter-spacing:0.101px;-webkit-text-stroke:0.3px #e9e3e1;">Colore cella</span>
<span style="left:1754.90px;top:536.00px;font-size:26.5px;line-height:30px;color:#e9e3e1;letter-spacing:0.425px;-webkit-text-stroke:0.3px #e9e3e1;">In alto</span>
<span style="left:2061.00px;top:536.00px;font-size:26.5px;line-height:30px;color:#e9e3e1;letter-spacing:0.011px;-webkit-text-stroke:0.3px #e9e3e1;">Nessun colo...</span>
<span style="left:1009.70px;top:592.00px;font-size:26.5px;line-height:30px;color:#ffffff;letter-spacing:0.296px;-webkit-text-stroke:0.3px #ffffff;">Quindi per</span>
<span style="left:1223.40px;top:592.00px;font-size:26.5px;line-height:30px;color:#d6eede;letter-spacing:-0.197px;-webkit-text-stroke:0.3px #d6eede;">Colonna E</span>
<span style="left:1559.00px;top:592.00px;font-size:26.5px;line-height:30px;color:#d6eede;letter-spacing:0.241px;-webkit-text-stroke:0.3px #d6eede;">Valori</span>
<span style="left:1754.90px;top:592.00px;font-size:26.5px;line-height:30px;color:#d6eede;letter-spacing:0.034px;-webkit-text-stroke:0.3px #d6eede;">Dal più piccolo al più...</span>
<svg style="left:1500px;top:520px;" width="800" height="120" viewBox="1500 520 800 120" fill="none" stroke-linecap="butt" stroke-linejoin="miter">
<path d="M1527 546.7l7 -7.200 7 7.200M1527 553.3l7 7.200 7-7.200" stroke="#c2bab8" stroke-width="3.100" stroke-linecap="round" stroke-linejoin="round"/>
<path d="M1725 546.7l7 -7.200 7 7.200M1725 553.3l7 7.200 7-7.200" stroke="#c2bab8" stroke-width="3.100" stroke-linecap="round" stroke-linejoin="round"/>
<path d="M2031 546.7l7 -7.200 7 7.200M2031 553.3l7 7.200 7-7.200" stroke="#c2bab8" stroke-width="3.100" stroke-linecap="round" stroke-linejoin="round"/>
<path d="M2243.2 546.7l7 -7.200 7 7.200M2243.2 553.3l7 7.200 7-7.200" stroke="#c2bab8" stroke-width="3.100" stroke-linecap="round" stroke-linejoin="round"/>
<path d="M1527 602.7l7 -7.200 7 7.200M1527 609.3l7 7.200 7-7.200" stroke="#b3d5c0" stroke-width="3.100" stroke-linecap="round" stroke-linejoin="round"/>
<path d="M1725 602.7l7 -7.200 7 7.200M1725 609.3l7 7.200 7-7.200" stroke="#b3d5c0" stroke-width="3.100" stroke-linecap="round" stroke-linejoin="round"/>
<path d="M2031 602.7l7 -7.200 7 7.200M2031 609.3l7 7.200 7-7.200" stroke="#b3d5c0" stroke-width="3.100" stroke-linecap="round" stroke-linejoin="round"/>
<path d="M2243.2 602.7l7 -7.200 7 7.200M2243.2 609.3l7 7.200 7-7.200" stroke="#2f8a53" stroke-width="3.100" stroke-linecap="round" stroke-linejoin="round"/>
</svg>
<div style="left:974px;top:826.5px;width:184px;height:47.5px;background:#4e413e;border:1.500px solid #6c605d;"></div>
<div style="left:1019.8px;top:826.5px;width:1.8px;height:47.5px;background:#6c605d;"></div>
<div style="left:1066px;top:826.5px;width:1.8px;height:47.5px;background:#6c605d;"></div>
<svg style="left:980px;top:830px;" width="90" height="40" viewBox="980 830 90 40" fill="none" stroke-linecap="butt" stroke-linejoin="miter">
<path d="M987.800 850.300h21M998.300 839.800v21M1034 850.300h21" stroke="#ece6e4" stroke-width="2.400"/>
</svg>
<span style="left:1076.70px;top:836.00px;font-size:26.5px;line-height:30px;color:#e9e3e1;letter-spacing:-0.175px;-webkit-text-stroke:0.3px #e9e3e1;">Copia</span>
<div style="left:997px;top:891.5px;width:185.5px;height:38.5px;background:#30241f;border:1.500px solid #4d413e;box-shadow:0 3px 10px rgba(0,0,0,.3);"></div>
<span style="left:1010.70px;top:897.00px;font-size:22px;line-height:25px;color:#f0ebe9;letter-spacing:0.685px;-webkit-text-stroke:0.3px #f0ebe9;">Aggiungi livello</span>
<div style="left:1818px;top:890px;width:156px;height:40px;background:#6a5e5b;border-radius:10px;box-shadow:0 1px 2px rgba(0,0,0,.35);"></div>
<div style="left:1998px;top:890px;width:130px;height:40px;background:#6a5e5b;border-radius:10px;box-shadow:0 1px 2px rgba(0,0,0,.35);"></div>
<div style="left:2152px;top:890px;width:142px;height:40px;background:linear-gradient(#1f8452,#187748);border-radius:10px;box-shadow:0 1px 2px rgba(0,0,0,.35);"></div>
<span style="left:1838.30px;top:893.00px;font-size:26.5px;line-height:30px;color:#f3efee;letter-spacing:0.503px;-webkit-text-stroke:0.3px #f3efee;">Opzioni...</span>
<span style="left:2017.90px;top:893.00px;font-size:26.5px;line-height:30px;color:#f3efee;letter-spacing:-0.061px;-webkit-text-stroke:0.3px #f3efee;">Annulla</span>
<span style="left:2203.40px;top:894.00px;font-size:25.5px;line-height:28px;color:#ffffff;letter-spacing:-1.335px;-webkit-text-stroke:0.3px #ffffff;">OK</span>
<div style="left:0px;top:1702px;width:2880px;height:53px;background:#323232;"></div>
<div style="left:0px;top:1702px;width:2880px;height:2px;background:#5a5a5a;"></div>
<div style="left:0px;top:1753.5px;width:2880px;height:1.5px;background:#050505;"></div>
<div style="left:0px;top:1755px;width:2880px;height:45px;background:linear-gradient(#4b4b4b,#3e3e3e);"></div>
<div style="left:121px;top:1702px;width:158px;height:44px;background:#ffffff;border-radius:0 0 7px 7px;"></div>
<span style="left:157.70px;top:1714.00px;font-size:24px;line-height:27px;color:#1f8450;font-weight:700;letter-spacing:-0.446px;">Foglio1</span>
<svg style="left:0px;top:1701px;" width="400" height="54" viewBox="0 1701 400 54" fill="none" stroke-linecap="butt" stroke-linejoin="miter">
<path d="M44.400 1720v20.600l-14.600-10.300z" fill="#565656"/><path d="M76 1720v20.600l14.600-10.300z" fill="#6a6a6a"/>
<path d="M308.700 1728.700h19.600M318.500 1719v19.500" stroke="#bdbdbd" stroke-width="4"/>
</svg>
<div style="left:354px;top:1705px;width:2px;height:40px;background:#585858;"></div>
<span style="left:48.60px;top:1764.00px;font-size:24px;line-height:27px;color:#e6e6e6;letter-spacing:0.647px;">Pronto</span>
<span style="left:199.60px;top:1764.00px;font-size:24px;line-height:27px;color:#e6e6e6;letter-spacing:0.620px;">Accessibilità: verifica</span>
<span style="left:1557.00px;top:1764.00px;font-size:24px;line-height:27px;color:#e6e6e6;letter-spacing:1.000px;">Media: 22465,66667</span>
<span style="left:1834.00px;top:1764.00px;font-size:24px;line-height:27px;color:#e6e6e6;letter-spacing:0.625px;">Conteggio: 18</span>
<span style="left:2032.00px;top:1764.00px;font-size:24px;line-height:27px;color:#e6e6e6;letter-spacing:1.053px;">Somma: 269588</span>
<span style="left:2768.20px;top:1764.00px;font-size:24px;line-height:27px;color:#e6e6e6;letter-spacing:0.486px;">100%</span>
<div style="left:2242px;top:1755px;width:74px;height:45px;background:#5c5c5c;"></div>
<div style="left:2504px;top:1773.5px;width:200.5px;height:8.5px;background:#7a7a7a;border-radius:4.500px;"></div>
<div style="left:2588px;top:1761px;width:32px;height:32px;background:#a9a9a9;border-radius:16px;box-shadow:0 1px 2px rgba(0,0,0,.4);"></div>
<svg style="left:150px;top:1755px;" width="2730" height="45" viewBox="150 1755 2730 45" fill="none" stroke-linecap="butt" stroke-linejoin="miter">
<g stroke="#f2f2f2" stroke-width="2" stroke-linecap="round" stroke-linejoin="round"><circle cx="175" cy="1766.300" r="3.700"/><path d="M162.600 1771.200l1.300-2.500 7.600 3.600h7l7.900-3.900 1.400 2.500-7.300 4.300-.200 4.200M175.200 1781.800l-6.500 8.800-2.500-1.400 4-9.500-.200-3.900-7.400-4.600M178.500 1780.500l12 10.500M190.500 1780.500l-12 10.500"/></g>
<g stroke="#fff" stroke-width="2.400"><rect x="2267" y="1765.500" width="24.500" height="23.500"/><path d="M2275.200 1765.500v23.500M2283.400 1765.500v23.500M2267 1773.300h24.500M2267 1781.200h24.500"/></g>
<g stroke="#fff" stroke-width="2.400"><rect x="2337.800" y="1765.500" width="26.500" height="23.500" rx="2"/><rect x="2344.500" y="1771" width="13" height="13" stroke-width="2"/><path d="M2347.500 1775.500h7M2347.500 1779.500h7" stroke-width="1.800"/></g>
<g stroke="#fff" stroke-width="2.400"><rect x="2409" y="1765.500" width="26" height="23.500" rx="2"/><path d="M2409 1778h17.500v-12.500M2418 1765.500v12.500"/></g>
<path d="M2474.400 1777.500h15.800M2718.400 1777.500h16M2726.400 1769.500v16" stroke="#fff" stroke-width="3.600"/>
</svg>
</body></html>
